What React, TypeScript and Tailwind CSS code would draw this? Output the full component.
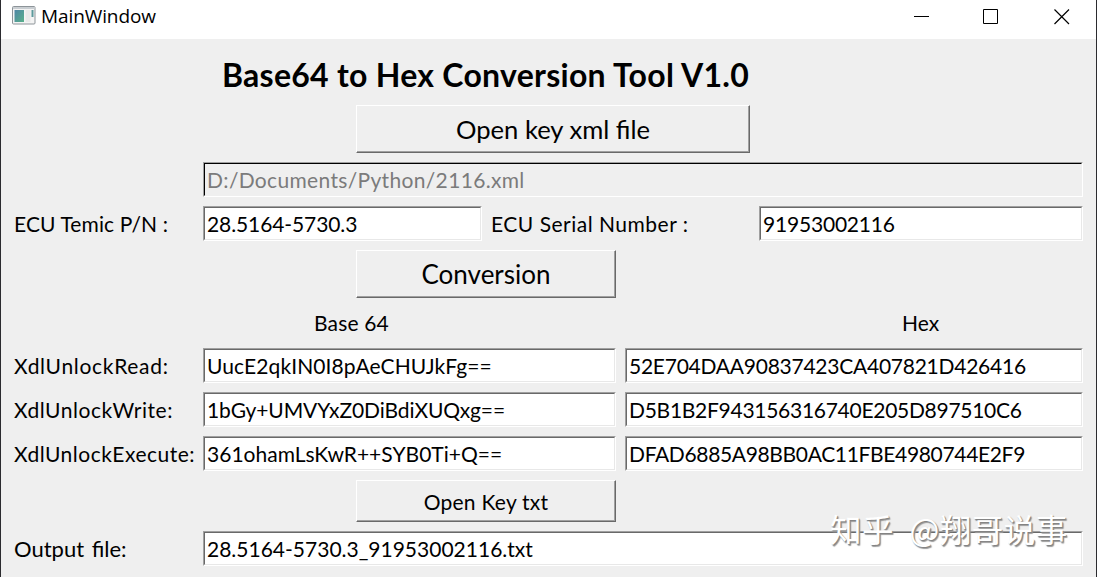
import type { ReactNode } from "react";

type FieldProps = {
  value: string;
  className?: string;
  textClass?: string;
  disabled?: boolean;
};

// Classic sunken line edit
function Field({ value, className = "", textClass = "", disabled = false }: FieldProps) {
  return (
    <div className={`h-[35px] border border-t-[#a0a0a0] border-l-[#a0a0a0] border-r-white border-b-white ${className}`}>
      <div
        className={`flex h-full items-center border pl-[2px] ${
          disabled
            ? "border-t-black border-l-black border-r-[#efefef] border-b-[#efefef] bg-[#efefef] text-[#7b7b7b]"
            : "border-t-[#696969] border-l-[#696969] border-r-[#e8e8e8] border-b-[#e8e8e8] bg-white text-black"
        }`}
      >
        <span className={`whitespace-pre ${textClass}`}>{value}</span>
      </div>
    </div>
  );
}

function PushButton({ className = "", children }: { className?: string; children: ReactNode }) {
  return (
    <button
      type="button"
      className={`ml-[356px] flex items-center justify-center border border-t-white border-l-white border-r-[#696969] border-b-[#696969] shadow-[inset_-1px_-1px_0_#a0a0a0] ${className}`}
    >
      {children}
    </button>
  );
}

function Label({ className = "", children }: { className?: string; children: ReactNode }) {
  return <span className={`shrink-0 whitespace-pre ${className}`}>{children}</span>;
}

const keys = [
  {
    label: "XdlUnlockRead:",
    base64: "UucE2qkIN0I8pAeCHUJkFg==",
    hex: "52E704DAA90837423CA407821D426416",
    labelClass: "tracking-[0.7px]",
    base64Class: "tracking-[0.1px]",
    hexClass: "tracking-[-0.25px]",
  },
  {
    label: "XdlUnlockWrite:",
    base64: "1bGy+UMVYxZ0DiBdiXUQxg==",
    hex: "D5B1B2F943156316740E205D897510C6",
    labelClass: "tracking-[0.55px]",
    base64Class: "tracking-[-0.1px]",
    hexClass: "tracking-[-0.28px]",
  },
  {
    label: "XdlUnlockExecute:",
    base64: "361ohamLsKwR++SYB0Ti+Q==",
    hex: "DFAD6885A98BB0AC11FBE4980744E2F9",
    labelClass: "tracking-[0.5px]",
    base64Class: "tracking-[0.02px]",
    hexClass: "tracking-[-0.34px]",
  },
];

function TitleBar() {
  return (
    <header className="flex h-[39px] items-start bg-white pl-[11px]">
      <svg className="mt-[6px]" width="24" height="19" viewBox="0 0 24 19">
        <defs>
          <linearGradient id="pane" x1="0" y1="0" x2="1" y2="1">
            <stop offset="0" stopColor="#4f86a6" />
            <stop offset="1" stopColor="#58b08a" />
          </linearGradient>
        </defs>
        <rect x="0.5" y="0.5" width="22.5" height="17.5" rx="1" fill="#f4f4f4" stroke="#8d9499" />
        <rect x="1" y="1" width="21.5" height="2" fill="#c9ced2" />
        <rect x="2.5" y="4" width="9.5" height="12" fill="url(#pane)" />
        <rect x="13.5" y="4" width="5" height="12" fill="#e9e9e9" />
        <rect x="19.5" y="4" width="2" height="7" fill="#5d9a9c" />
      </svg>
      <span className="ml-[5px] mt-[4px] font-['Open_Sans',sans-serif] text-[19px] leading-[24px] tracking-[-0.1px]">
        MainWindow
      </span>
      <svg className="ml-auto mr-[25px] mt-[8px]" width="157" height="17" viewBox="0 0 157 17" fill="none" stroke="#000">
        <path d="M0 8.5h15M69.5 1.5h14v14h-14z" />
        <path d="M140.5 1.5l14.5 14.5M155 1.5L140.5 16" strokeWidth="1.2" />
      </svg>
    </header>
  );
}

export default function App() {
  return (
    <div className="relative h-[577px] w-[1097px] overflow-hidden border-x border-[#2b2b2f] bg-[#efefef] font-['Lato',sans-serif] text-[21px] leading-[24px] text-black">
      <TitleBar />

      <main className="-ml-px flex w-[1083px] flex-col gap-[9px] pt-[9px]">
        <h1 className="flex h-[48px] items-center pt-[5px] pl-[222px] text-[32px] font-bold tracking-[0.27px] whitespace-pre">
          Base64 to Hex Conversion Tool V1.0
        </h1>

        <PushButton className="h-[48px] w-[394px] text-[25.6px]">Open key xml file</PushButton>

        <Field value="D:/Documents/Python/2116.xml" disabled className="ml-[203px]" textClass="tracking-[0.33px]" />

        <div className="flex items-center">
          <Label className="w-[203px] pl-[14px] tracking-[0.1px]">ECU Temic P/N :</Label>
          <Field value="28.5164-5730.3" className="w-[279px]" textClass="tracking-[-0.1px]" />
          <Label className="w-[277px] pl-[9px] tracking-[0.5px]">ECU Serial Number :</Label>
          <Field value="91953002116" className="flex-1" textClass="tracking-[-0.2px]" />
        </div>

        <PushButton className="h-[48px] w-[260px] text-[26px]">Conversion</PushButton>

        <div className="flex h-[32px] items-center">
          <Label className="w-[588px] pl-[314px] tracking-[0.15px]">Base 64</Label>
          <Label className="pl-[314px]">Hex</Label>
        </div>

        {keys.map((k) => (
          <div key={k.label} className="flex items-center">
            <Label className={`w-[203px] pl-[14px] ${k.labelClass}`}>{k.label}</Label>
            <Field value={k.base64} className="w-[413px]" textClass={k.base64Class} />
            <Field value={k.hex} className="ml-[9px] flex-1" textClass={k.hexClass} />
          </div>
        ))}

        <PushButton className="h-[42px] w-[260px] pt-[2px] tracking-[0.25px]">Open Key txt</PushButton>

        <div className="flex items-center">
          <Label className="w-[203px] pl-[14px] text-[22px] [word-spacing:2px]">Output file:</Label>
          <Field value="28.5164-5730.3_91953002116.txt" className="flex-1" />
        </div>
      </main>

      {/* Watermark over the lower right corner */}
      <div className="absolute left-[829px] top-[508px] font-['Noto_Sans_CJK_SC',sans-serif] text-[31.5px] leading-[40px] tracking-[0.5px] [word-spacing:8px] whitespace-pre text-white [text-shadow:1px_1px_1px_#808080,1.5px_1.5px_1px_#a0a0a0]">
        知乎 @翔哥说事
      </div>
    </div>
  );
}
